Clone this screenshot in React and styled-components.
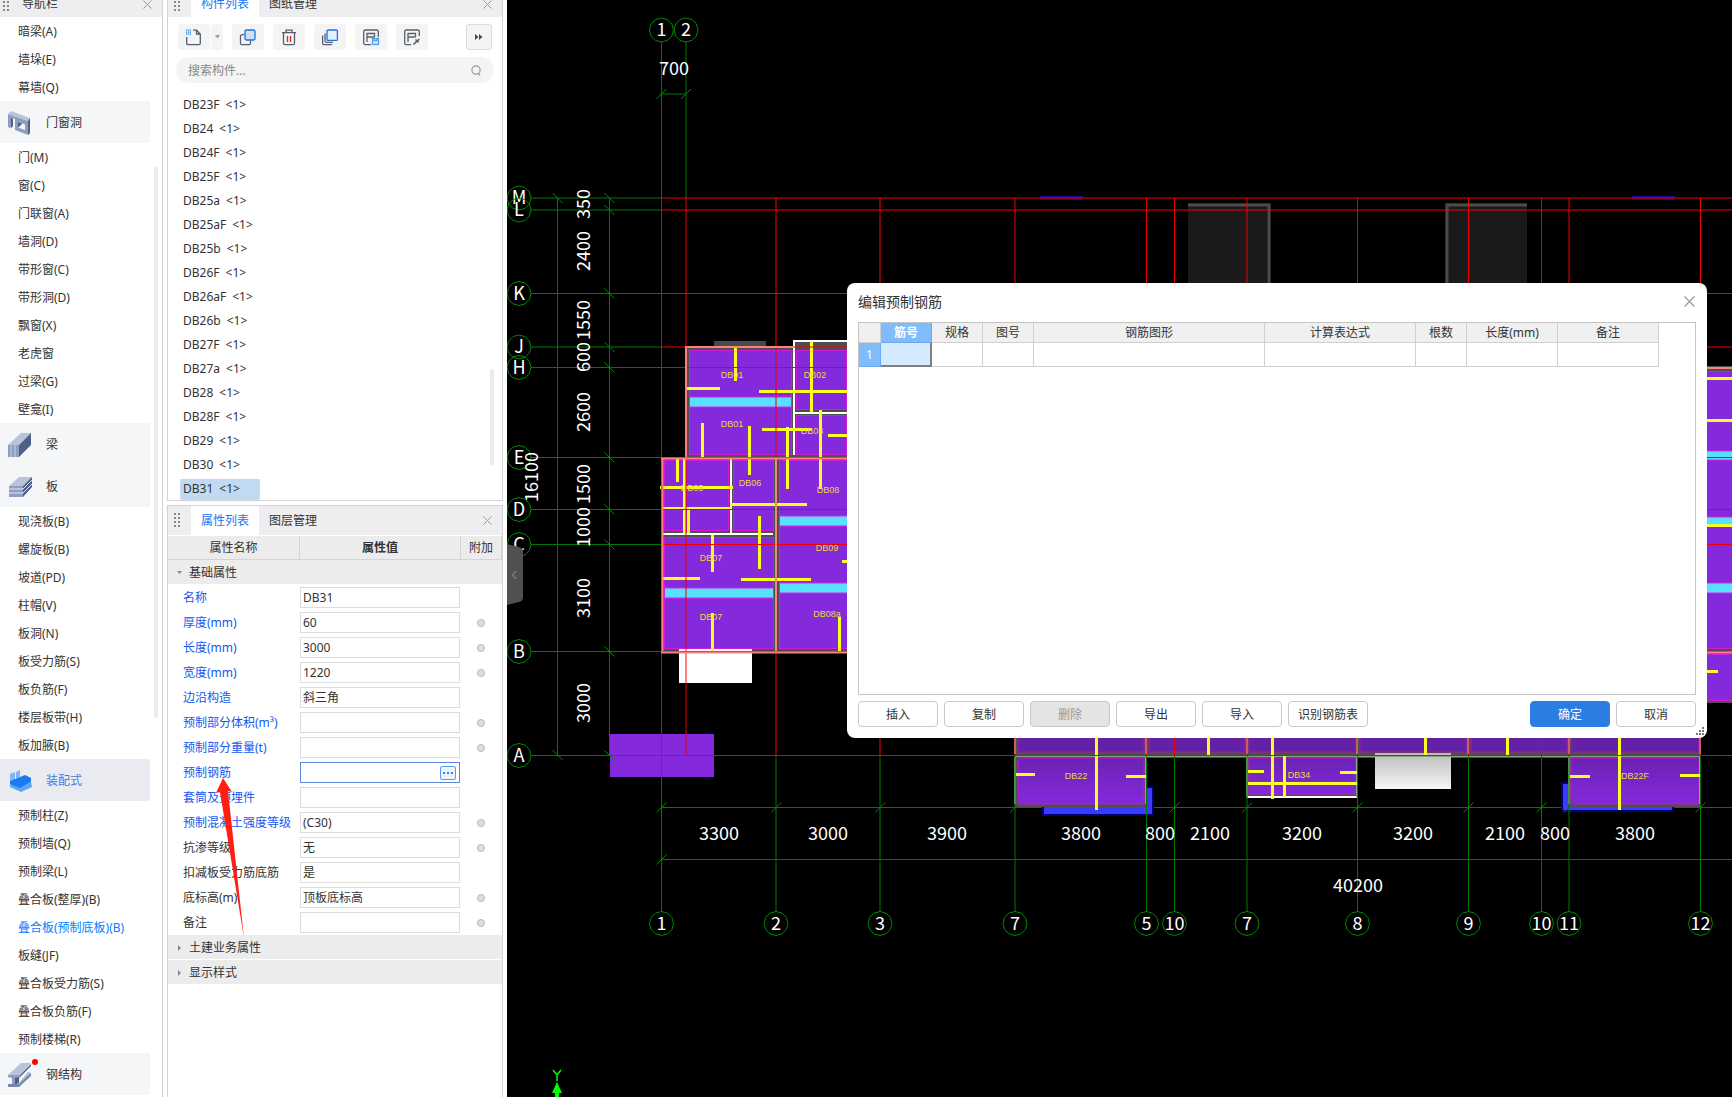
import { useState } from 'react';
import styled, { createGlobalStyle } from 'styled-components';


const GlobalStyle = createGlobalStyle`
    * { box-sizing: border-box; }
    body {
        margin: 0;
        background: #fff;
        color: #333;
        font-family: "Noto Sans", "Noto Sans CJK SC", sans-serif;
        font-size: 12px;
        line-height: 16px;
    }
    button, input { font: inherit; color: inherit; }
    button { padding: 0; border: 0; background: none; cursor: pointer; }
    ul { margin: 0; padding: 0; list-style: none; }
`

/* ---------- data ---------- */

const navGroups = [
    { items: ['暗梁(A)', '墙垛(E)', '幕墙(Q)'] },
    { title: '门窗洞', icon: 'opening', items: ['门(M)', '窗(C)', '门联窗(A)', '墙洞(D)', '带形窗(C)', '带形洞(D)', '飘窗(X)', '老虎窗', '过梁(G)', '壁龛(I)'] },
    { title: '梁', icon: 'beam', items: [] },
    { title: '板', icon: 'slab', items: ['现浇板(B)', '螺旋板(B)', '坡道(PD)', '柱帽(V)', '板洞(N)', '板受力筋(S)', '板负筋(F)', '楼层板带(H)', '板加腋(B)'] },
    { title: '装配式', icon: 'prefab', active: true, items: ['预制柱(Z)', '预制墙(Q)', '预制梁(L)', '叠合板(整厚)(B)', '叠合板(预制底板)(B)', '板缝(JF)', '叠合板受力筋(S)', '叠合板负筋(F)', '预制楼梯(R)'] },
    { title: '钢结构', icon: 'steel', dot: true, items: [] },
];

const components = ['DB23F', 'DB24', 'DB24F', 'DB25F', 'DB25a', 'DB25aF', 'DB25b', 'DB26F', 'DB26aF', 'DB26b', 'DB27F', 'DB27a', 'DB28', 'DB28F', 'DB29', 'DB30', 'DB31'];

const properties = [
    { name: '名称', value: 'DB31', blue: true },
    { name: '厚度(mm)', value: '60', blue: true, extra: true },
    { name: '长度(mm)', value: '3000', blue: true, extra: true },
    { name: '宽度(mm)', value: '1220', blue: true, extra: true },
    { name: '边沿构造', value: '斜三角', blue: true },
    { name: '预制部分体积(m³)', value: '', blue: true, extra: true },
    { name: '预制部分重量(t)', value: '', blue: true, extra: true },
    { name: '预制钢筋', value: '', blue: true, editing: true },
    { name: '套筒及预埋件', value: '', blue: true },
    { name: '预制混凝土强度等级', value: '(C30)', blue: true, extra: true },
    { name: '抗渗等级', value: '无', extra: true },
    { name: '扣减板受力筋底筋', value: '是' },
    { name: '底标高(m)', value: '顶板底标高', extra: true },
    { name: '备注', value: '', extra: true },
];

const rebarColumns = [
    ['筋号', 51], ['规格', 51], ['图号', 51], ['钢筋图形', 231], ['计算表达式', 151], ['根数', 51], ['长度(mm)', 91], ['备注', 101],
];

/* ---------- icons ---------- */

const groupIcons = {
    opening: (
        <svg width="24" height="24" viewBox="0 0 24 24">
            <path d="M0 3 3 0 22 7 20 10z" fill="#b9c3da" />
            <path d="M0 3 20 10V24L7 19V8L5 7V15L2 17 0 16z" fill="#8f9dc0" />
            <path d="M20 10 22 7V22L20 24zM3 8 5 7V15L3 17z" fill="#4f5f87" />
            <path d="M10 11 17 13.500V19L10 16.500z" fill="#f5f6f8" />
            <path d="M10 11 14 12.500 12 15 10 16.500z" fill="#4f5f87" />
        </svg>
    ),
    beam: (
        <svg width="24" height="24" viewBox="0 0 24 24">
            <path d="M0 12 13 0 23 0 11 12z" fill="#b9c3da" />
            <path d="M11 12 23 0 23 12 11 24z" fill="#4f5f87" />
            <path d="M0 12h11v12H0z" fill="#8f9dc0" />
            <path d="M3 12v12M7 12v12" stroke="#c9d1e3" />
        </svg>
    ),
    slab: (
        <svg width="24" height="24" viewBox="0 0 24 24">
            <path d="M1 11 11 2 24 2 15 11z" fill="#b9c3da" />
            <path d="M1 11h14v11H1z" fill="#8f9dc0" />
            <path d="M15 11 24 2 24 12 15 22z" fill="#4f5f87" />
            <path d="M1 14h14l9-9M1 18h14l9-9" fill="none" stroke="#e4e8f1" />
        </svg>
    ),
    prefab: (
        <svg width="24" height="24" viewBox="0 0 24 24">
            <path d="M2 5 7 3v8L2 12zM8 3l4-2v7l-4 2z" fill="#7fb5f8" />
            <path d="M2 12 17 6 23 9 23 13 11 20 2 16z" fill="#1f7af0" />
            <path d="M2 15 12 19 23 13 24 18 13 23 2 18z" fill="#5ca6fa" />
        </svg>
    ),
    steel: (
        <svg width="24" height="24" viewBox="0 0 24 24">
            <path d="M0 12 13 0H23L12 12z" fill="#b9c3da" />
            <path d="M12 12 23 1V3L11 15V20L6 22V14z" fill="#4f5f87" />
            <path d="M0 12H12V14L7 15V21H4V15L0 14z" fill="#8f9dc0" />
            <path d="M11 20 20 9 23 10 11 22z" fill="#aeb9d3" />
            <path d="M0 21H11L23 10V13L11 24H0z" fill="#7585ac" />
        </svg>
    ),
};

const Glyph = ({ children }) => (
    <svg width="18" height="18" viewBox="0 0 18 18" fill="none" stroke="#565f6e" strokeWidth="1.3">{children}</svg>
);

const NewIcon = () => (
    <Glyph>
        <path d="M1.7 9v6.3a1.3 1.3 0 0 0 1.3 1.3h11a1.3 1.3 0 0 0 1.3-1.3V6L11.5 2.2H8M11.5 2.4V6h3.6" />
        <path d="M1 2.2h5M1 4.2h5M1 6.2h5" stroke="#2f7fe6" strokeWidth="1.2" strokeDasharray="1.2 .7" />
    </Glyph>
);
const CopyIcon = () => (
    <Glyph>
        <path d="M5.5 6.7H3a1.5 1.5 0 0 0-1.5 1.5v7A1.5 1.5 0 0 0 3 16.7h7a1.5 1.5 0 0 0 1.5-1.5V12.5" />
        <rect x="6" y="2" width="10" height="10" rx="1.5" fill="#cddff7" stroke="#1b72e0" />
    </Glyph>
);
const DeleteIcon = () => (
    <Glyph>
        <path d="M2 4.7h14M6 4.5V2.2h6v2.3M3.5 4.7v10.5a1.5 1.5 0 0 0 1.5 1.5h8a1.5 1.5 0 0 0 1.5-1.5V4.7" />
        <path d="M7.5 8v6M10.5 8v6" stroke="#e02020" />
    </Glyph>
);
const LayerIcon = () => (
    <Glyph>
        <path d="M1.6 7.5v7.7a1.5 1.5 0 0 0 1.5 1.5h8M4 5.5v7.3a1.5 1.5 0 0 0 1.5 1.5H12" />
        <rect x="6" y="2" width="10.4" height="10.4" rx="1.2" fill="#e6f1ff" stroke="#1b72e0" />
    </Glyph>
);
const SaveIcon = () => (
    <Glyph>
        <path d="M16.3 9V3.5A1.5 1.5 0 0 0 14.8 2H3.2a1.5 1.5 0 0 0-1.5 1.5v11.6a1.5 1.5 0 0 0 1.5 1.5H9M5 5V14M5 9h7.500M5 5.500h7.500V9" />
        <rect x="10.5" y="10.5" width="6" height="6" fill="#d7e8ff" stroke="#5a9bea" />
        <path d="M12 10.5v2h3v-2" stroke="#5a9bea" />
    </Glyph>
);
const PickIcon = () => (
    <Glyph>
        <path d="M16.3 8V3.5A1.5 1.5 0 0 0 14.8 2H3.2a1.5 1.5 0 0 0-1.5 1.5v11.6a1.5 1.5 0 0 0 1.5 1.5H8M5 5V14M5 9h7.500M5 5.500h7.500V9" />
        <path d="M10.5 16.5 14.5 12.5M12.5 11.500l3 3M14.500 13l1.800-2" strokeWidth="1.6" />
    </Glyph>
);
const CloseIcon = ({ size = 9 }) => (
    <svg width={size} height={size} viewBox="0 0 10 10" stroke="#999" strokeWidth="1.1"><path d="M.5.5l9 9M9.5.5l-9 9" /></svg>
);
const GripIcon = () => (
    <svg width="7" height="15" viewBox="0 0 7 15" fill="#888">
        {[0, 4, 8, 12].map((y) => <path key={y} d={`M0 ${y}h2v2h-2zM4 ${y}h2v2h-2z`} />)}
    </svg>
);
const FoldIcon = ({ open }) => (
    <svg width="6" height="6" viewBox="0 0 6 6" fill="#888"><path d={open ? 'M0 1h5L2.500 4z' : 'M1 0v6L4 3z'} /></svg>
);

/* ---------- left navigation ---------- */

const NavPanel = () => {
    const [current, setCurrent] = useState('叠合板(预制底板)(B)');

    return (
        <NavBox>
            <PanelHead $clipped>
                <GripIcon />
                <NavTitle>导航栏</NavTitle>
                <CloseButton aria-label="关闭导航栏"><CloseIcon /></CloseButton>
            </PanelHead>
            {navGroups.map((group, i) => (
                <div key={i}>
                    {group.title && (
                        <GroupButton $active={group.active}>
                            <GroupIcon>
                                {groupIcons[group.icon]}
                                {group.dot && <RedDot />}
                            </GroupIcon>
                            {group.title}
                        </GroupButton>
                    )}
                    <ul>
                        {group.items.map((item) => (
                            <li key={item}>
                                <NavItem $active={item === current} onClick={() => setCurrent(item)}>{item}</NavItem>
                            </li>
                        ))}
                    </ul>
                </div>
            ))}
            <NavThumb />
        </NavBox>
    )
}

/* ---------- component list ---------- */

const ComponentPanel = () => {
    const [selected, setSelected] = useState('DB31');

    return (
        <Panel>
            <PanelHead $clipped>
                <GripIcon />
                <Tab $active>构件列表</Tab>
                <Tab>图纸管理</Tab>
                <CloseButton aria-label="关闭构件列表"><CloseIcon /></CloseButton>
            </PanelHead>
            <Toolbar>
                <Split>
                    <ToolButton aria-label="新建"><NewIcon /></ToolButton>
                    <ToolButton $narrow aria-label="新建选项">
                        <svg width="5" height="4" viewBox="0 0 5 4" fill="#999"><path d="M0 0h5L2.500 3.500z" /></svg>
                    </ToolButton>
                </Split>
                <ToolButton aria-label="复制"><CopyIcon /></ToolButton>
                <ToolButton aria-label="删除"><DeleteIcon /></ToolButton>
                <ToolButton aria-label="层间复制"><LayerIcon /></ToolButton>
                <ToolButton aria-label="存档"><SaveIcon /></ToolButton>
                <ToolButton aria-label="提取"><PickIcon /></ToolButton>
                <MoreButton aria-label="更多">
                    <svg width="8" height="6" viewBox="0 0 8 6" fill="#444b58"><path d="M0 0l3.500 3L0 6zM4 0l3.500 3L4 6z" /></svg>
                </MoreButton>
            </Toolbar>
            <SearchBox>
                <input type="text" aria-label="搜索构件" placeholder="搜索构件..." />
                <svg width="11" height="11" viewBox="0 0 12 12" fill="none" stroke="#999" strokeWidth="1.300"><circle cx="5.500" cy="5.500" r="4.500" /><path d="M8 9 10 11.500" /></svg>
            </SearchBox>
            <ComponentList>
                {components.map((name) => (
                    <li key={name}>
                        <ComponentItem $active={name === selected} onClick={() => setSelected(name)}>
                            <span>{name}</span>
                            <span>&lt;1&gt;</span>
                        </ComponentItem>
                    </li>
                ))}
                <ListThumb />
            </ComponentList>
        </Panel>
    )
}

/* ---------- properties ---------- */

const PropertyPanel = () => (
    <Panel $fill>
        <PanelHead>
            <GripIcon />
            <Tab $active>属性列表</Tab>
            <Tab>图层管理</Tab>
            <CloseButton aria-label="关闭属性列表"><CloseIcon /></CloseButton>
        </PanelHead>
        <PropTable>
            <colgroup><col width="132" /><col width="161" /><col /></colgroup>
            <thead>
                <tr>
                    <th>属性名称</th>
                    <th className="bold">属性值</th>
                    <th>附加</th>
                </tr>
            </thead>
            <tbody>
                <tr><SectionCell colSpan="3"><SectionButton><FoldIcon open />基础属性</SectionButton></SectionCell></tr>
                {properties.map((p, i) => (
                    <tr key={p.name}>
                        <NameCell $blue={p.blue}><label htmlFor={`prop${i}`}>{p.name}</label></NameCell>
                        <td>
                            <ValueBox $editing={p.editing}>
                                <input id={`prop${i}`} type="text" defaultValue={p.value} />
                                {p.editing && (
                                    <DotsButton aria-label="编辑预制钢筋">
                                        <svg width="10" height="2" viewBox="0 0 10 2" fill="#2f7fe6"><path d="M0 0h2v2H0zM4 0h2v2H4zM8 0h2v2H8z" /></svg>
                                    </DotsButton>
                                )}
                            </ValueBox>
                        </td>
                        <ExtraCell>{p.extra && <input type="checkbox" aria-label={`${p.name} 附加`} />}</ExtraCell>
                    </tr>
                ))}
                <tr><SectionCell colSpan="3"><SectionButton><FoldIcon />土建业务属性</SectionButton></SectionCell></tr>
                <tr><SectionCell colSpan="3"><SectionButton><FoldIcon />显示样式</SectionButton></SectionCell></tr>
            </tbody>
        </PropTable>
    </Panel>
)

/* ---------- drawing ---------- */

const axisX = [
    [661.5, '1'], [686, null], [776, '2'], [880, '3'], [1015, '7'], [1146.5, '5'], [1174.5, '10'], [1247, '7'],
    [1357.5, '8'], [1468.5, '9'], [1541.5, '10'], [1569, '11'], [1700.5, '12'],
];
const axisY = [
    [198, 'M'], [210, 'L'], [293.5, 'K'], [347, 'J'], [367.5, 'H'], [457.5, 'E'], [509.5, 'D'], [544.5, 'C'], [651.5, 'B'], [755.5, 'A'],
];
const dimsX = [
    [719, '3300'], [828, '3000'], [947, '3900'], [1081, '3800'], [1160, '800'], [1210, '2100'], [1302, '3200'],
    [1413, '3200'], [1505, '2100'], [1555, '800'], [1635, '3800'],
];
const dimsY = [
    [204, '350'], [251, '2400'], [320, '1550'], [357, '600'], [412, '2600'], [484, '1500'], [527, '1000'], [598, '3100'], [703, '3000'],
];

// x, y, width, height
const backing = [
    [686, 347, 107, 111], [793, 341, 60, 117], [661, 457, 200, 196], [1015, 730, 686, 28],
    [1015, 755, 131, 52], [1247, 755, 111, 42], [1569, 755, 132, 52], [1700, 366, 32, 337],
];
const slabs = [
    [689.5, 350.5, 102, 104], [796.5, 350.5, 50, 59], [796.5, 415.5, 50, 39], [664.5, 460.5, 64, 70], [733.5, 460.5, 40, 70],
    [664.5, 537.5, 109, 111], [779.5, 460.5, 80, 188], [1700.5, 371.5, 40, 277], [1700.5, 654.5, 40, 46],
];
const shadedSlabs = [
    [1018, 126], [1149, 96], [1249, 107], [1360, 107], [1471, 96], [1571, 128],
];
const lowerSlabs = [[1018, 758, 126, 46], [1249, 758, 107, 36], [1571, 758, 128, 46]];
const strips = [
    [689.5, 397, 102, 10], [664.5, 588, 109, 10], [779.5, 516, 80, 10], [779.5, 583, 80, 10],
    [1700, 451, 40, 9], [1700, 517, 40, 9], [1700, 583, 40, 10],
];
const barsV = [
    [735, 348, 381], [811, 341, 412], [702, 423, 457], [749, 426, 475], [787, 427, 489], [820, 410, 489], [677, 458, 482],
    [684, 458, 533], [688, 510, 533], [759, 516, 569], [712, 535, 572], [712, 613, 651], [839, 617, 651],
    [1096, 738, 810], [1272, 738, 799], [1284, 756, 797], [1208, 730, 755], [1425, 730, 755], [1507, 730, 755], [1619, 730, 810],
];
const barsH = [
    [388, 687, 720], [391, 759, 850], [429, 762, 812], [435, 828, 850], [487, 660, 733], [508, 662, 731], [504, 730, 807],
    [578, 663, 700], [579, 741, 811], [561, 842, 850], [774, 1016, 1035], [776, 1126, 1146], [771, 1248, 1264],
    [772, 1340, 1357], [783, 1248, 1357], [776, 1570, 1590], [775, 1680, 1700], [378, 1700, 1732], [420, 1700, 1732],
    [525, 1700, 1732], [671, 1700, 1718],
];
const marks = [
    [732, 375, 'DB01'], [732, 424, 'DB01'], [815, 375, 'DB02'], [812, 431, 'DB03'], [692, 488, 'DB05'], [750, 483, 'DB06'],
    [828, 490, 'DB08'], [827, 548, 'DB09'], [711, 558, 'DB07'], [711, 617, 'DB07'], [827, 614, 'DB08a'],
    [1076, 776, 'DB22'], [1299, 775, 'DB34'], [1635, 776, 'DB22F'],
];

const Bubble = ({ x, y, text }) => {
    const points = Array.from({ length: 12 }, (_, i) => {
        const a = (i * Math.PI) / 6;
        return `${x + 12 * Math.sin(a)},${y + 12 * Math.cos(a)}`;
    }).join(' ');
    return (
        <g>
            <polygon points={points} fill="none" stroke="#008a00" />
            <text x={x} y={Math.round(y + 6.4)}>{text}</text>
        </g>
    );
}

const Rects = ({ items, ...rest }) => items.map(([x, y, w, h], i) => <rect key={i} x={x} y={y} width={w} height={h} {...rest} />);

const Drawing = () => (
    <Svg viewBox="507 0 1225 1097" width="1225" height="1097">
        <defs>
            <linearGradient id="shade" x1="0" y1="0" x2="0" y2="1"><stop offset="0" stopColor="#6a22b4" /><stop offset="1" stopColor="#8429dc" /></linearGradient>
            <linearGradient id="whiteShade" x1="0" y1="0" x2="0" y2="1"><stop offset="0" stopColor="#bcbcbc" /><stop offset="1" stopColor="#f6f6f6" /></linearGradient>
        </defs>

        {/* stairs and walls at the top */}
        <path d="M1188 203h83v100h-83zM1445 203h82v100h-82z" fill="#1a1a1a" />
        <path d="M1188 205h81v100M1527 205h-80v100" fill="none" stroke="#4b4b4b" strokeWidth="3" />
        <path d="M1040 198h43M1632 198h43" stroke="#1a0a90" strokeWidth="4" />
        <rect x="714" y="341" width="52" height="5" fill="#4a4a4a" />

        {/* green axis extensions */}
        <path
            d="M661.5 42V198M686 42V198M661.5 94H686M557.5 198V755M609.5 198V755M661.5 807.5H1732M661.5 859.5H1732"
            stroke="#007a00" fill="none"
        />

        <path d="M1043 804h101v-17h9v28h-110zM1562 783h9v22h102v6h-111z" fill="#3b3bff" stroke="#00007f" strokeWidth="2" />
        <Rects items={backing} fill="#4f4f4f" />
        <Rects items={slabs} fill="#8429dc" stroke="#d41ad8" />
        {shadedSlabs.map(([x, w]) => <rect key={x} x={x} y="730" width={w} height="22" fill="#6421a6" stroke="#a814ae" />)}
        <Rects items={lowerSlabs} fill="url(#shade)" stroke="#c815cc" />
        <Rects items={strips} fill="#57e0ff" stroke="#e81ae8" />
        <rect x="610" y="734" width="104" height="43" fill="#8429dc" />
        <rect x="679" y="649" width="73" height="34" fill="#fff" />
        <rect x="1375" y="753" width="76" height="36" fill="url(#whiteShade)" />

        <path d="M793 341H850M794 340V455M794 413H850M731 459V534M662 534H773M1247 797H1357" fill="none" stroke="#fff" strokeWidth="2" />
        <path d="M1015 757V804M1146 757V804M1247 757V797M1357 757V797M1569 757V804M1700 757V804M1015 756H1700" fill="none" stroke="#7fa67f" strokeWidth="2" />

        <g stroke="#fdfd26" strokeWidth="3">
            {barsV.map(([x, y1, y2], i) => <line key={i} x1={x + 0.5} x2={x + 0.5} y1={y1} y2={y2} />)}
            {barsH.map(([y, x1, x2], i) => <line key={i} y1={y + 0.5} y2={y + 0.5} x1={x1} x2={x2} />)}
        </g>
        <g className="mark">
            {marks.map(([x, y, text], i) => <text key={i} x={x} y={y + 3}>{text}</text>)}
        </g>

        {/* axes */}
        {axisX.map(([x, label], i) => (
            <g key={i}>
                <line x1={x} x2={x} y1="198" y2="755" stroke="#f00000" />
                {label && <line x1={x} x2={x} y1="756" y2="911" stroke="#007a00" />}
                {label && <path d={`M${x - 5} 812.5l10 -10`} stroke="#008a00" />}
                {label && <Bubble x={x} y={923.5} text={label} />}
            </g>
        ))}
        {axisY.map(([y, label]) => (
            <g key={label}>
                <line x1="531" x2="661" y1={y} y2={y} stroke="#007a00" />
                <line x1="661" x2="1732" y1={y} y2={y} stroke="#f00000" />
                <path d={`M604.5 ${y - 5}l10 10`} stroke="#008a00" />
                <Bubble x={519} y={y} text={label} />
            </g>
        ))}
        <path d="M656.5 99l10-10M681 99l10-10M552.5 193l10 10M552.5 750l10 10M656.5 864.5l10-10" stroke="#008a00" />
        <Bubble x={661.5} y={30} text="1" />
        <Bubble x={686} y={30} text="2" />

        {/* wall outlines lie over the axes */}
        <path
            d="M686 457V347H793M662.5 652V458M661 458.500H850M661 652.500H850M776 457V652M686 653V682M1700 368H1732M1700 652.500H1732"
            fill="none" stroke="#fb8080" strokeWidth="2"
        />
        <path d="M661 457.500H850M661 651.500H850" stroke="#f04040" />
        <path d="M1015 738V754M1146 738V754M1247 738V754M1357 738V754M1468 738V754M1569 738V754M1700 738V754" stroke="#c86060" strokeWidth="2" />

        {/* dimensions */}
        <text x="674" y="75">700</text>
        {dimsX.map(([x, text], i) => <text key={i} x={x} y="840">{text}</text>)}
        <text x="1358" y="892">40200</text>
        {dimsY.map(([y, text]) => <text key={text + y} transform={`translate(590 ${y}) rotate(-90)`}>{text}</text>)}
        <text transform="translate(538 477) rotate(-90)">16100</text>

        <path d="M553 1070l4 5 4-5M557 1075v6" fill="none" stroke="#0f0" strokeWidth="1.5" />
        <path d="M557 1082l5 11h-3v4h-4v-4h-3z" fill="#0f0" />
    </Svg>
)

/* ---------- dialog ---------- */

const RebarDialog = () => (
    <Dialog role="dialog" aria-label="编辑预制钢筋">
        <DialogHead>
            编辑预制钢筋
            <button aria-label="关闭"><CloseIcon size={11} /></button>
        </DialogHead>
        <GridBox>
            <RebarTable>
                <colgroup>
                    <col width="22" />
                    {rebarColumns.map(([name, width]) => <col key={name} width={width} />)}
                </colgroup>
                <thead>
                    <tr>
                        <th></th>
                        {rebarColumns.map(([name], i) => <th key={name} className={i === 0 ? 'current' : ''}>{name}</th>)}
                    </tr>
                </thead>
                <tbody>
                    <tr>
                        <th className="current" scope="row">1</th>
                        {rebarColumns.map(([name], i) => <td key={name} className={i === 0 ? 'selected' : ''}></td>)}
                    </tr>
                </tbody>
            </RebarTable>
        </GridBox>
        <ButtonRow>
            <DialogButton>插入</DialogButton>
            <DialogButton>复制</DialogButton>
            <DialogButton disabled>删除</DialogButton>
            <DialogButton>导出</DialogButton>
            <DialogButton>导入</DialogButton>
            <DialogButton>识别钢筋表</DialogButton>
            <Spacer />
            <DialogButton $primary>确定</DialogButton>
            <DialogButton>取消</DialogButton>
        </ButtonRow>
        <ResizeGrip width="8" height="8" viewBox="0 0 8 8" fill="#777">
            <path d="M6 0h2v2H6zM3 3h2v2H3zM6 3h2v2H6zM0 6h2v2H0zM3 6h2v2H3zM6 6h2v2H6z" />
        </ResizeGrip>
    </Dialog>
)

const App = () => (
    <Page>
        <GlobalStyle />
        <NavPanel />
        <SideColumn>
            <ComponentPanel />
            <PropertyPanel />
            <Arrow width="32" height="164" viewBox="0 0 32 164">
                <path d="M8 1 17 15 13 14 29 161 5 15 1 16z" fill="#ff1e10" />
            </Arrow>
        </SideColumn>
        <Canvas>
            <Drawing />
            <Handle aria-label="收起面板">
                <svg width="16" height="62" viewBox="0 0 16 62">
                    <path d="M0 0 12 3Q16 4 16 8V53Q16 57 12 58L0 61z" fill="#505050" />
                    <path d="M9 27 5.5 31 9 35" fill="none" stroke="#999" />
                </svg>
            </Handle>
            <RebarDialog />
        </Canvas>
    </Page>
)


export default App;

const Page = styled.div`
    display: flex;
    gap: 4px;
    height: 100vh;
    overflow: hidden;
`
const NavBox = styled.nav`
    position: relative;
    flex: none;
    width: 163px;
    border-right: 1px solid #d4d4d4;
    overflow: hidden;
`
const PanelHead = styled.div`
    display: flex;
    align-items: center;
    height: ${(p) => (p.$clipped ? '26px' : '30px')};
    margin-top: ${(p) => (p.$clipped ? '-9px' : '0')};
    padding-left: 6px;
    padding-right: 10px;
    background: #eeeef0;
    border-bottom: ${(p) => (p.$clipped ? '0' : '1px solid #fff')};
    nav & { padding-left: 3px; }
`
const NavTitle = styled.span`
    margin-left: 12px;
`
const CloseButton = styled.button`
    display: flex;
    margin-left: auto;
`
const Tab = styled.button`
    align-self: stretch;
    width: 68px;
    background: ${(p) => (p.$active ? '#fff' : 'transparent')};
    color: ${(p) => (p.$active ? '#1877f2' : '#333')};
    svg + & { margin-left: 10px; }
`
const GroupButton = styled.button`
    display: flex;
    align-items: center;
    gap: 14px;
    width: 150px;
    height: 42px;
    padding-top: 2px;
    padding-left: 8px;
    background: ${(p) => (p.$active ? '#e9ebf0' : '#f5f6f8')};
    color: ${(p) => (p.$active ? '#3f7fe0' : '#333')};
`
const GroupIcon = styled.span`
    position: relative;
    display: flex;
`
const RedDot = styled.i`
    position: absolute;
    top: -4px;
    right: -6px;
    width: 6px;
    height: 6px;
    border-radius: 50%;
    background: #f00;
`
const NavItem = styled.button`
    display: block;
    width: 150px;
    height: 28px;
    padding-top: 2px;
    padding-left: 18px;
    text-align: left;
    white-space: nowrap;
    color: ${(p) => (p.$active ? '#0a7cff' : '#333')};
`
const Thumb = styled.i`
    position: absolute;
    width: 4px;
    border-radius: 2px;
    background: #ebebeb;
`
const NavThumb = styled(Thumb)`
    right: 4px;
    top: 167px;
    height: 551px;
`
const SideColumn = styled.div`
    position: relative;
    display: flex;
    flex: none;
    flex-direction: column;
    gap: 4px;
    width: 336px;
`
const Panel = styled.section`
    flex: ${(p) => (p.$fill ? '1' : 'none')};
    border: 1px solid #d4d4d4;
    border-top-width: ${(p) => (p.$fill ? '1px' : '0')};
    border-bottom-width: ${(p) => (p.$fill ? '0' : '1px')};
    overflow: hidden;
`
const Toolbar = styled.div`
    display: flex;
    gap: 9px;
    padding: 7px 10px;
`
const Split = styled.div`
    display: flex;
    gap: 1px;
`
const ToolButton = styled.button`
    display: flex;
    align-items: center;
    justify-content: center;
    width: ${(p) => (p.$narrow ? '12px' : '32px')};
    height: 26px;
    border-radius: 3px;
    background: #f4f4f4;
`
const MoreButton = styled(ToolButton)`
    width: 26px;
    margin-left: auto;
    border: 1px solid #dcdcdc;
`
const SearchBox = styled.div`
    display: flex;
    align-items: center;
    height: 26px;
    margin: 0 8px;
    padding: 0 12px;
    border-radius: 13px;
    background: #f4f4f4;
    input {
        flex: 1;
        min-width: 0;
        padding: 1px 0 0;
        border: 0;
        outline: 0;
        background: none;
        &::placeholder { color: #888; }
    }
`
const ComponentList = styled.ul`
    position: relative;
    margin: 10px 0 -1px 12px;
    li {
        display: flex;
        align-items: center;
        height: 24px;
    }
`
const ComponentItem = styled.button`
    display: flex;
    align-items: center;
    gap: 6px;
    min-width: 80px;
    height: 21px;
    padding: 0 3px;
    border-radius: 2px;
    background: ${(p) => (p.$active ? '#c2d9f2' : 'none')};
`
const ListThumb = styled(Thumb)`
    right: 8px;
    top: 276px;
    height: 96px;
`
const PropTable = styled.table`
    width: 100%;
    table-layout: fixed;
    border-spacing: 0;
    td, th { padding: 0; }
    thead th {
        height: 24px;
        padding-top: 1px;
        background: #ececec;
        border-right: 1px solid #d4d4d4;
        border-bottom: 1px solid #d4d4d4;
        font-weight: 400;
        &.bold { font-weight: 700; }
    }
`
const SectionCell = styled.td`
    height: 25px;
    background: #ececec;
    border-bottom: 1px solid #fff;
`
const SectionButton = styled.button`
    display: flex;
    align-items: center;
    gap: 6px;
    padding-top: 1px;
    padding-left: 9px;
`
const NameCell = styled.th`
    height: 25px;
    font-weight: 400;
    text-align: left;
    white-space: nowrap;
    color: ${(p) => (p.$blue ? '#1557f0' : '#333')};
    label { padding-left: 15px; }
`
const ValueBox = styled.div`
    display: flex;
    align-items: center;
    height: 21px;
    margin-right: 1px;
    padding: 0 3px 0 2px;
    border: 1px solid ${(p) => (p.$editing ? '#5b87dd' : '#dcdcdc')};
    input {
        flex: 1;
        min-width: 0;
        padding: 0;
        border: 0;
        outline: 0;
        background: none;
    }
`
const DotsButton = styled.button`
    display: flex;
    align-items: center;
    justify-content: center;
    width: 16px;
    height: 14px;
    border: 1px solid #5a9bea;
    border-radius: 2px;
    background: #eaf4ff;
`
const ExtraCell = styled.td`
    input {
        appearance: none;
        display: block;
        width: 8px;
        height: 8px;
        margin: 0 0 0 16px;
        border: 1px solid #b8b8b8;
        border-radius: 50%;
        background: #dedee2;
    }
`
const Arrow = styled.svg`
    position: absolute;
    left: 48px;
    top: 777px;
    pointer-events: none;
`
const Canvas = styled.main`
    position: relative;
    flex: 1;
    min-width: 0;
    background: #000;
    overflow: hidden;
`
const Svg = styled.svg`
    display: block;
    text {
        fill: #fff;
        font-family: "Noto Sans CJK SC", sans-serif;
        font-size: 18px;
        text-anchor: middle;
    }
    .mark text {
        fill: #e8dc30;
        font-family: "Liberation Sans", sans-serif;
        font-size: 9px;
    }
`
const Handle = styled.button`
    position: absolute;
    left: 0;
    top: 544px;
    display: flex;
`
const Dialog = styled.div`
    position: absolute;
    left: 340px;
    top: 283px;
    display: flex;
    flex-direction: column;
    width: 860px;
    height: 455px;
    padding: 0 11px 11px;
    border-radius: 8px;
    background: #fff;
`
const DialogHead = styled.div`
    display: flex;
    align-items: center;
    justify-content: space-between;
    height: 39px;
    padding-right: 1px;
    padding-bottom: 2px;
    font-size: 14px;
    button { display: flex; }
`
const GridBox = styled.div`
    flex: 1;
    margin-bottom: 6px;
    border: 1px solid #c4c4c4;
`
const RebarTable = styled.table`
    width: 800px;
    table-layout: fixed;
    border-spacing: 0;
    th, td {
        padding: 0;
        border-right: 1px solid #d0d0d0;
        border-bottom: 1px solid #d0d0d0;
    }
    th {
        height: 20px;
        padding-top: 1px;
        background: #f0f0f0;
        font-weight: 400;
    }
    td { height: 24px; }
    .current {
        background: #80bbfa;
        border-color: #6aa9ee;
        color: #fff;
    }
    thead .current { font-weight: 700; }
    .selected {
        background: #d6eaff;
        border-right: 2px solid #808080;
        border-bottom: 2px solid #808080;
    }
`
const ButtonRow = styled.div`
    display: flex;
    gap: 6px;
`
const Spacer = styled.span`
    flex: 1;
`
const DialogButton = styled.button`
    width: 80px;
    height: 26px;
    padding-top: 1px;
    border: 1px solid ${(p) => (p.$primary ? '#2b7de1' : '#c8c8c8')};
    border-radius: 4px;
    background: ${(p) => (p.$primary ? '#2b7de1' : '#fff')};
    color: ${(p) => (p.$primary ? '#fff' : '#333')};
    &:disabled {
        background: #e4e4e4;
        color: #999;
    }
`
const ResizeGrip = styled.svg`
    position: absolute;
    right: 3px;
    bottom: 3px;
`
